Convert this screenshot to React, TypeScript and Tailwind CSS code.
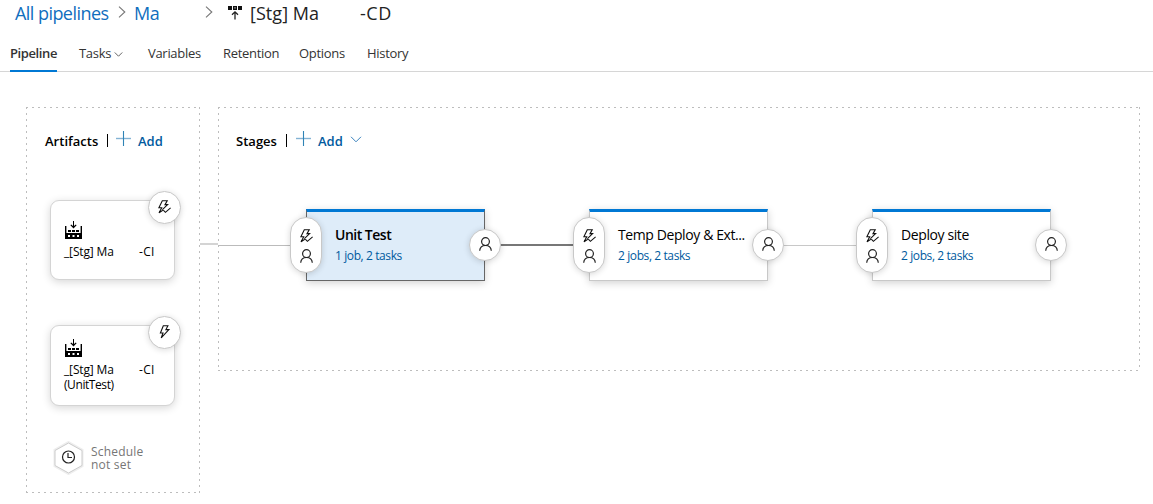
import type { ReactNode } from 'react';

const text = "[font-family:'Open_Sans','Noto_Sans',sans-serif]";

const dotted =
  'bg-[repeating-linear-gradient(90deg,#bdbdbd_0_2px,transparent_2px_6px),repeating-linear-gradient(90deg,#bdbdbd_0_2px,transparent_2px_6px),repeating-linear-gradient(180deg,#bdbdbd_0_2px,transparent_2px_6px),repeating-linear-gradient(180deg,#bdbdbd_0_2px,transparent_2px_6px)] [background-size:100%_1px,100%_1px,1px_100%,1px_100%] [background-position:0_0,0_100%,0_0,100%_0] bg-no-repeat';

function Bolt({ check = false }: { check?: boolean }) {
  return (
    <svg width="15" height="14" viewBox="0 0 15 14" fill="none" stroke="#111" strokeWidth="1.1">
      {check ? (
        <>
          <path d="M5.8 10.2 2 12.9 4.7 7.8H1.9L5.3 .8H10.2L8 4.6H10.6L5.4 9.6" />
          <path d="M6.3 10.2 8.4 12.3 13.6 7.8" />
        </>
      ) : (
        <path d="M6.3 .8H10.9L8.9 4.6H11.9L4.2 12.9 6 8H3.4Z" />
      )}
    </svg>
  );
}

function Person() {
  return (
    <svg width="14" height="14" viewBox="0 0 14 14" fill="none" stroke="#222" strokeWidth="1.2">
      <circle cx="7.5" cy="4.6" r="3.9" />
      <path d="M1.7 13.8C1.9 10.4 4.4 8.5 7.5 8.5S13.1 10.4 13.3 13.8" />
    </svg>
  );
}

function Chevron({ down = false, className = '' }: { down?: boolean; className?: string }) {
  return down ? (
    <svg width="12" height="7" viewBox="0 0 12 7" fill="none" stroke="currentColor" className={className}>
      <path d="M1 .8 6 5.8 11 .8" />
    </svg>
  ) : (
    <svg width="8" height="12" viewBox="0 0 8 12" fill="none" stroke="currentColor" strokeWidth="1.1" className={className}>
      <path d="M1 .6 6.8 6 1 11.4" />
    </svg>
  );
}

function Build() {
  return (
    <svg width="17" height="18" viewBox="0 0 17 18" fill="#000">
      <path d="M8 0H9V5L10.8 3.4 11.6 4.2 8.5 7.4 5.4 4.2 6.2 3.4 8 5Z" />
      <path d="M0 5H1.4V12H15.6V5H17V18H0ZM3 9H6V11H3ZM7 9H10V11H7ZM11 9H14V11H11Z" />
      <path d="M3 14H5V16H3ZM7.5 14H9.5V16H7.5ZM12 14H14V16H12Z" fill="#fff" />
    </svg>
  );
}

function Plus() {
  return (
    <svg width="15" height="15" viewBox="0 0 15 15" fill="none">
      <path d="M0 7.5H15" stroke="#83b3d4" strokeWidth="1.4" />
      <path d="M7.5 0V15" stroke="#2f83b5" strokeWidth="1.1" />
    </svg>
  );
}

function Artifact({ check, second, className }: { check?: boolean; second?: string; className: string }) {
  return (
    <div className={`relative ml-[24px] w-[125px] rounded-[9px] border border-[#d4d4d4] bg-white pl-[13px] shadow-[0_2px_8px_rgba(0,0,0,0.16)] ${className}`}>
      <div className="absolute -top-[10px] left-[97px] flex size-[33px] items-center justify-center rounded-full border border-[#c8c8c8] bg-white pb-[2px] shadow-[0_1px_6px_rgba(0,0,0,0.14)]">
        <Bolt check={check} />
      </div>
      <div className="pl-px"><Build /></div>
      <div className="mt-[5px] flex text-[12px] leading-[15px] tracking-[-0.15px]">
        <span className="w-[75px]">_[Stg] Ma</span>
        <span className="tracking-[0.3px]">-CI</span>
      </div>
      {second && <div className="text-[12px] leading-[15px] tracking-[-0.42px]">{second}</div>}
    </div>
  );
}

function Stage({ title, jobs, active }: { title: ReactNode; jobs: string; active?: boolean }) {
  return (
    <div className={`relative h-[72px] w-[179px] shrink-0 border border-t-[3px] border-t-[#0078d4] pl-[28px] pt-[14px] shadow-[0_2px_8px_rgba(0,0,0,0.18)] ${active ? 'border-[#666] bg-[#deecf9]' : 'border-[#c8c8c8] bg-white'}`}>
      <div className={`text-[14px] leading-[18px] whitespace-nowrap text-black ${active ? 'font-semibold tracking-[-0.5px]' : 'tracking-[-0.4px]'}`}>{title}</div>
      <div className="mt-[4px] text-[12px] leading-[16px] tracking-[-0.4px] text-[#005a9e]">{jobs}</div>
      <div className="absolute -left-[17px] top-[5px] flex h-[56px] w-[32px] flex-col items-center gap-[6px] rounded-full border border-[#c8c8c8] bg-white pt-[11px] shadow-[0_1px_6px_rgba(0,0,0,0.16)]">
        <Bolt check />
        <Person />
      </div>
      <div className="absolute left-[162px] top-[17px] flex size-[32px] items-center justify-center rounded-full border border-[#c8c8c8] bg-white pb-[2px] shadow-[0_1px_6px_rgba(0,0,0,0.16)]">
        <Person />
      </div>
    </div>
  );
}

export default function App() {
  return (
    <div className={`flex h-[504px] w-[1153px] flex-col overflow-hidden bg-white text-black ${text}`}>
      <header className="h-[72px] shrink-0 border-b border-[#d6d6d6]">
        <div className="flex h-[26px] items-center pl-[15px] text-[18px] tracking-[-0.55px] text-[#106ebe]">
          <span className="w-[103px] whitespace-nowrap">All pipelines</span>
          <Chevron className="-mt-[3px] text-[#777]" />
          <span className="ml-[8px] w-[71px]">Ma</span>
          <Chevron className="-mt-[3px] text-[#777]" />
          <svg width="14" height="14" viewBox="0 0 14 14" className="mr-[8px] ml-[15px]">
            <path d="M0 0H4V4H0ZM5 0H9V4H5ZM10 0H14V4H10Z" fill="#111" />
            <path d="M6.5 1.3H7.5V2.6H6.5Z" fill="#fff" />
            <path d="M7 13.5V6M4 8.8 7 5.8 10 8.8" stroke="#222" strokeWidth="1.3" fill="none" />
          </svg>
          <span className="w-[110px] tracking-[0.05px] text-[#222]">[Stg] Ma</span>
          <span className="tracking-[0.5px] text-[#222]">-CD</span>
        </div>
        <nav className="flex h-[46px] pl-[10px] text-[13px] leading-[18px] tracking-[-0.3px] text-[#333]">
          <span className="mr-[22px] w-[47px] border-b-2 border-[#0078d4] pt-[18px] font-semibold tracking-[-0.4px]">Pipeline</span>
          <span className="flex w-[69px] pt-[18px]">Tasks<Chevron down className="mt-[7px] ml-[3px] w-[9px]" /></span>
          <span className="w-[75px] pt-[18px]">Variables</span>
          <span className="w-[76px] pt-[18px]">Retention</span>
          <span className="w-[68px] pt-[18px]">Options</span>
          <span className="pt-[18px]">History</span>
        </nav>
      </header>
      <main className="flex items-start pt-[35px] pl-[26px]">
        <section className={`h-[386px] w-[174px] ${dotted}`}>
          <div className="flex h-[44px] items-end pl-[19px] text-[13px] leading-[20px] font-semibold tracking-[0.02px]">
            <span className="w-[62px]">Artifacts</span>
            <span className="mb-[4px] h-[13px] w-px bg-black" />
            <span className="mr-[7px] mb-[5px] ml-[8px]"><Plus /></span>
            <span className="tracking-[0px] text-[#005a9e]">Add</span>
          </div>
          <Artifact check className="mt-[49px] h-[80px] pt-[20px]" />
          <Artifact second="(UnitTest)" className="mt-[45px] h-[81px] pt-[13px]" />
          <div className="mt-[35px] flex items-center pl-[27px]">
            <svg width="31" height="34" viewBox="0 0 31 34" fill="none">
              <path d="M15.5 1.5 29 9.2V24.8L15.5 32.5 2 24.8V9.2Z" stroke="#eee" strokeWidth="3" />
              <path d="M15.5 2 29 9.5V24.5L15.5 32 2 24.5V9.5Z" stroke="#ccc" fill="#fff" />
              <circle cx="15.5" cy="16" r="6" stroke="#222" strokeWidth="1.2" />
              <path d="M15 12V16.5H19" stroke="#222" strokeWidth="1.2" />
            </svg>
            <p className="ml-[7px] text-[12px] leading-[13px] tracking-[0.2px] text-[#767676]">Schedule<br />not set</p>
          </div>
        </section>
        <div className="mt-[136px] h-[2px] w-[18px] bg-[#d4d4d4]" />
        <section className={`h-[264px] w-[922px] ${dotted}`}>
          <div className="flex h-[44px] items-end pl-[18px] text-[13px] leading-[20px] font-semibold tracking-[0.02px]">
            <span className="w-[50px]">Stages</span>
            <span className="mb-[4px] h-[13px] w-px bg-black" />
            <span className="mr-[7px] mb-[5px] ml-[9px]"><Plus /></span>
            <span className="w-[32px] tracking-[0px] text-[#005a9e]">Add</span>
            <Chevron down className="mb-[8px] text-[#3b83bd]" />
          </div>
          <div className="mt-[58px] flex items-center">
            <div className="h-px w-[88px] bg-[#bbb]" />
            <Stage active title="Unit Test" jobs="1 job, 2 tasks" />
            <div className="h-[2px] w-[104px] bg-[#777]" />
            <Stage title="Temp Deploy & Ext..." jobs="2 jobs, 2 tasks" />
            <div className="h-px w-[104px] bg-[#c8c8c8]" />
            <Stage title="Deploy site" jobs="2 jobs, 2 tasks" />
          </div>
        </section>
      </main>
    </div>
  );
}
